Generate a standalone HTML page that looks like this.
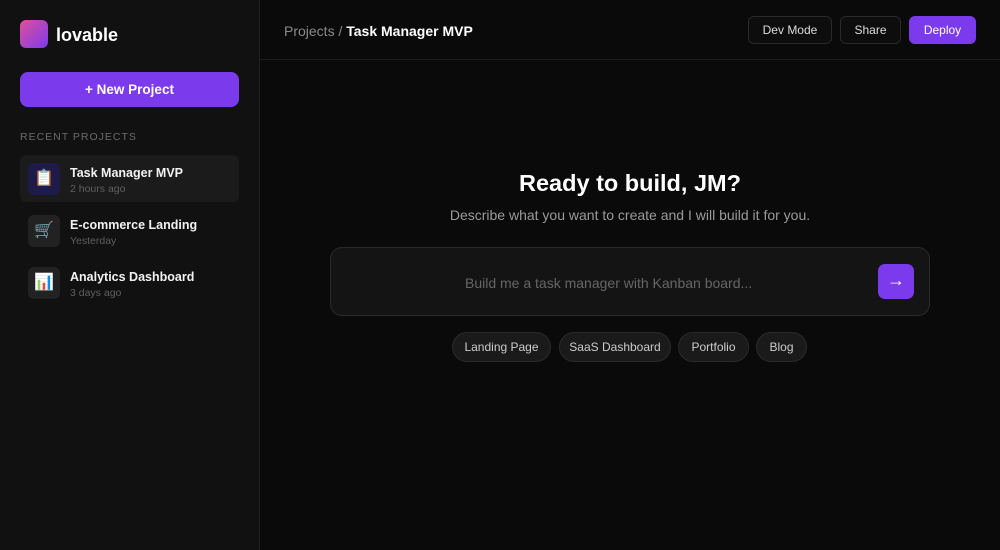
<!DOCTYPE html>
<html><head><meta charset="utf-8"><style>
*{margin:0;padding:0;box-sizing:border-box}
body{width:1000px;height:550px;background:#0a0a0a;font-family:"Liberation Sans",sans-serif;color:#fff;position:relative;overflow:hidden}
.side{position:absolute;left:0;top:0;width:260px;height:550px;background:#111;border-right:1px solid #1f1f1f}
.abs{position:absolute}
.logo{left:20px;top:20px;width:28px;height:28px;border-radius:6px;background:linear-gradient(135deg,#e0509a,#7c3aed)}
.brand{left:56px;top:25px;font-size:18px;font-weight:bold}
.np{left:20px;top:72px;width:219px;height:35px;border-radius:8px;background:#7c3aed;font-weight:bold;font-size:13.5px;text-align:center;line-height:36px}
.rp{left:20px;top:131px;font-size:10.5px;color:#6b6b6b;letter-spacing:1px}
.item{left:20px;width:219px;height:47px;border-radius:6px}
.ic{position:absolute;left:8px;top:8px;width:32px;height:32px;border-radius:6px;background:#222;font-size:16px;text-align:center;line-height:32px}
.t{position:absolute;left:50px;top:11px;font-size:12.5px;font-weight:bold;color:#f2f2f2}
.s{position:absolute;left:50px;top:28px;font-size:10.5px;color:#5f5f5f}
.hdr{left:260px;top:0;width:740px;height:60px;border-bottom:1px solid #1c1c1c}
.bc{left:284px;top:23px;font-size:14px;color:#8a8a8a}
.bc b{color:#fff}
.btn{top:16px;height:28px;border:1px solid #2a2a2a;border-radius:6px;font-size:12px;color:#ddd;text-align:center;line-height:27px;background:#0d0d0d}
.h1{left:260px;width:740px;top:170px;text-align:center;font-size:23.5px;font-weight:bold}
.sub{left:260px;width:740px;top:207px;text-align:center;font-size:14px;color:#9a9a9a}
.inp{left:330px;top:247px;width:600px;height:69px;border:1px solid #2a2a2a;border-radius:12px;background:#141414}
.ph{left:465px;top:275px;font-size:14px;color:#666}
.send{left:878px;top:264px;width:36px;height:35px;border-radius:7px;background:#7c3aed;text-align:center;line-height:33px;font-size:18px}
.chip{top:332px;height:30px;border:1px solid #2a2a2a;border-radius:15px;background:#1a1a1a;font-size:12px;color:#ccc;text-align:center;line-height:29px}
</style></head><body>
<div class="side"></div>
<div class="abs logo"></div>
<div class="abs brand">lovable</div>
<div class="abs np">+ New Project</div>
<div class="abs rp">RECENT PROJECTS</div>
<div class="abs item" style="top:155px;background:#1b1b1b"><div class="ic" style="background:#1e1b4b">📋</div><div class="t">Task Manager MVP</div><div class="s">2 hours ago</div></div>
<div class="abs item" style="top:207px"><div class="ic">🛒</div><div class="t">E-commerce Landing</div><div class="s">Yesterday</div></div>
<div class="abs item" style="top:259px"><div class="ic">📊</div><div class="t">Analytics Dashboard</div><div class="s">3 days ago</div></div>
<div class="abs hdr"></div>
<div class="abs bc">Projects / <b>Task Manager MVP</b></div>
<div class="abs btn" style="left:748px;width:84px">Dev Mode</div>
<div class="abs btn" style="left:840px;width:61px">Share</div>
<div class="abs btn" style="left:909px;width:67px;background:#7c3aed;border-color:#7c3aed;color:#fff">Deploy</div>
<div class="abs h1">Ready to build, JM?</div>
<div class="abs sub">Describe what you want to create and I will build it for you.</div>
<div class="abs inp"></div>
<div class="abs ph">Build me a task manager with Kanban board...</div>
<div class="abs send">→</div>
<div class="abs chip" style="left:452px;width:99px">Landing Page</div>
<div class="abs chip" style="left:559px;width:112px">SaaS Dashboard</div>
<div class="abs chip" style="left:678px;width:71px">Portfolio</div>
<div class="abs chip" style="left:756px;width:51px">Blog</div>
</body></html>
